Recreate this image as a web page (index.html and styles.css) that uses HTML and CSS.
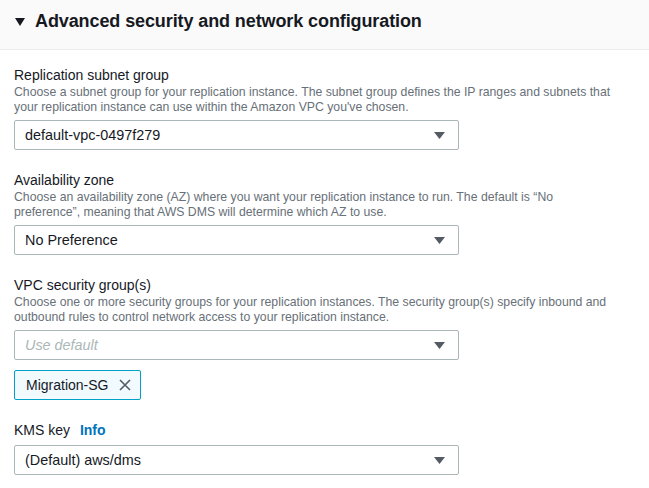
FILE: index.html
```html
<!DOCTYPE html>
<html lang="en">
<head>
<meta charset="utf-8">
<title>Advanced security and network configuration</title>
<link rel="stylesheet" href="styles.css">
</head>
<body>
<section class="panel">
  <header class="panel-header">
    <svg class="caret" width="10" height="8" viewBox="0 0 10 8"><path d="M0 0 H10 L5 8 Z" fill="#16191f"/></svg>
    <h2>Advanced security and network configuration</h2>
  </header>
  <div class="panel-body">
    <div class="field">
      <div class="label">Replication subnet group</div>
      <div class="desc">Choose a subnet group for your replication instance. The subnet group defines the IP ranges and subnets that your replication instance can use within the Amazon VPC you've chosen.</div>
      <div class="select"><span class="value">default-vpc-0497f279</span><svg class="arrow" width="11" height="7" viewBox="0 0 11 7"><path d="M0 0 H11 L5.5 7 Z"/></svg></div>
    </div>
    <div class="field">
      <div class="label">Availability zone</div>
      <div class="desc">Choose an availability zone (AZ) where you want your replication instance to run. The default is “No preference”, meaning that AWS DMS will determine which AZ to use.</div>
      <div class="select"><span class="value">No Preference</span><svg class="arrow" width="11" height="7" viewBox="0 0 11 7"><path d="M0 0 H11 L5.5 7 Z"/></svg></div>
    </div>
    <div class="field">
      <div class="label">VPC security group(s)</div>
      <div class="desc">Choose one or more security groups for your replication instances. The security group(s) specify inbound and outbound rules to control network access to your replication instance.</div>
      <div class="select"><span class="value placeholder">Use default</span><svg class="arrow" width="11" height="7" viewBox="0 0 11 7"><path d="M0 0 H11 L5.5 7 Z"/></svg></div>
      <div class="tokens">
        <div class="token"><span>Migration-SG</span><svg class="x" width="12" height="12" viewBox="0 0 12 12"><path d="M1 1 L11 11 M11 1 L1 11" stroke="#545b64" stroke-width="1.6" fill="none"/></svg></div>
      </div>
    </div>
    <div class="field">
      <div class="label">KMS key <a class="info" href="#">Info</a></div>
      <div class="select"><span class="value">(Default) aws/dms</span><svg class="arrow" width="11" height="7" viewBox="0 0 11 7"><path d="M0 0 H11 L5.5 7 Z"/></svg></div>
    </div>
  </div>
</section>
</body>
</html>
```
FILE: styles.css
```css
html, body {
  margin: 0;
  padding: 0;
  background: #ffffff;
}
body {
  font-family: "Liberation Sans", Arial, sans-serif;
  color: #16191f;
}
.panel-header {
  height: 49px;
  background: #fafafa;
  border-bottom: 1px solid #eaeded;
  display: flex;
  align-items: center;
  padding-left: 15px;
  box-sizing: content-box;
}
.caret {
  margin-right: 10px;
  margin-top: -5px;
}
.panel-header h2 {
  margin: 0;
  font-size: 18px;
  font-weight: 700;
  line-height: 22px;
  margin-top: -8px;
  letter-spacing: -0.1px;
}
.panel-body {
  padding: 15px 0 0 14px;
  width: 608px;
  display: flex;
  flex-direction: column;
  gap: 20px;
}
.field {
  display: flex;
  flex-direction: column;
}
.label {
  font-size: 14px;
  line-height: 20px;
  color: #16191f;
}
.info {
  color: #0073bb;
  font-weight: 700;
  text-decoration: none;
  margin-left: 6px;
}
.desc {
  font-size: 12.25px;
  line-height: 15px;
  color: #687078;
}
.select {
  margin-top: 5px;
  width: 445px;
  height: 30px;
  box-sizing: border-box;
  border: 1px solid #aab7b8;
  border-radius: 2px;
  display: flex;
  align-items: center;
  justify-content: space-between;
  padding: 0 13px 0 10px;
  font-size: 14.4px;
}
.value {
  color: #16191f;
}
.placeholder {
  color: #aab7b8;
  font-style: italic;
}
.arrow {
  fill: #545b64;
}
.tokens {
  margin-top: 10px;
  display: flex;
}
.token {
  height: 30px;
  box-sizing: border-box;
  background: #f1faff;
  border: 1px solid #00a1c9;
  border-radius: 2px;
  display: flex;
  align-items: center;
  gap: 11px;
  padding: 0 9px 0 11px;
  font-size: 14px;
}
```
